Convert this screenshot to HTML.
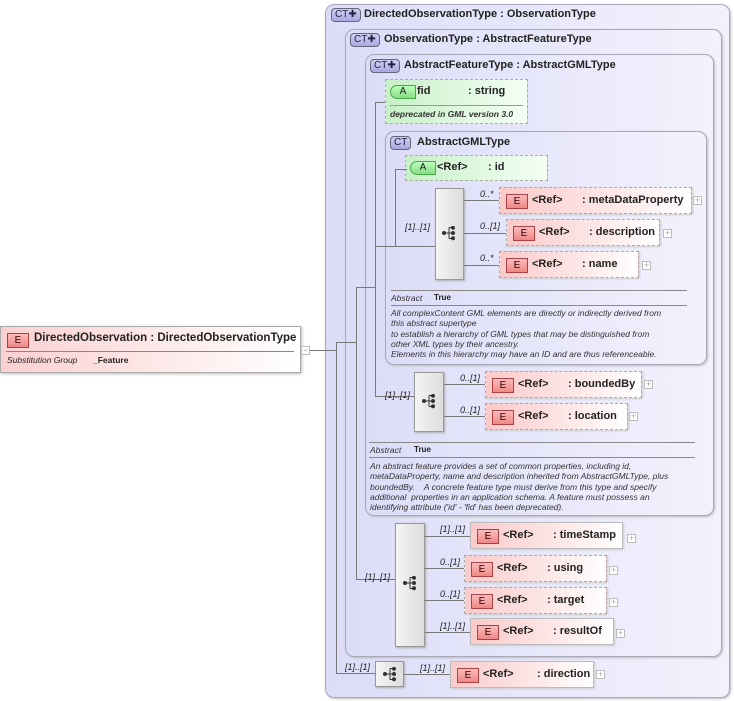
<!DOCTYPE html>
<html><head><meta charset="utf-8"><style>
*{margin:0;padding:0;box-sizing:border-box}
body{width:734px;height:701px;background:#fff;position:relative;overflow:hidden;font-family:"Liberation Sans",Arial,sans-serif;color:#222}
.a{position:absolute}
.ct{position:absolute;border:1px solid #a8a8b8;border-radius:9px;background:linear-gradient(to right,#dcdcf8,#ececfc 70%,#f2f2fd);box-shadow:1px 1px 2px #bbb}
.ttl{position:absolute;font-size:11px;font-weight:bold;white-space:nowrap}
.badge{position:absolute;height:14px;border:1px solid #667;border-radius:4px;background:linear-gradient(#d0d0f4,#a8a8e0);font-size:10px;line-height:12px;padding:0 3px;color:#224}
.el{position:absolute;height:27px;background:linear-gradient(to right,#fbcaca,#fde8e8 60%,#fff);border:1px solid #bbb;box-shadow:1px 1px 2px #ccc;font-size:11px;font-weight:bold;white-space:nowrap}
.el.d{border:1px dashed #aaa}
.eb{position:absolute;left:6px;top:6px;width:22px;height:15px;border:1px solid #a44;background:linear-gradient(#fbb,#e88);font-size:10px;font-weight:normal;text-align:center;line-height:13px;color:#300}
.el .r{position:absolute;left:32px;top:6px}
.el .n{position:absolute;top:6px}
.pl{position:absolute;width:9px;height:9px;border:1px solid #bbb;background:#fff;font-size:9px;line-height:7px;text-align:center;color:#aaa}
.seq{position:absolute;border:1px solid #999;background:linear-gradient(to right,#f4f4f4,#ddd);box-shadow:1px 1px 2px #aaa}
.lab{position:absolute;font-size:9px;font-style:italic;white-space:nowrap;color:#222}
.h{position:absolute;height:1px;background:#777}
.v{position:absolute;width:1px;background:#777}
.at{position:absolute;background:linear-gradient(to right,#c8f0c8,#f4fff4);border:1px dashed #aaa;font-size:11px;font-weight:bold;white-space:nowrap}
.ab{position:absolute;left:4px;top:5px;width:26px;height:14px;border:1px solid #4a4;border-radius:7px 0 0 7px;background:linear-gradient(#bfb,#8d8);font-size:10px;font-weight:normal;text-align:center;line-height:12px}
.doc{position:absolute;font-size:8.5px;font-style:italic;line-height:10.3px;color:#333}
</style></head><body>
<svg width="0" height="0" style="position:absolute"><defs><g id="sq"><circle cx="2" cy="7" r="2" fill="#333"/><path d="M2 7H7M7 1.5V12.5M7 1.5H10M7 7H10M7 12.5H10" stroke="#333" fill="none"/><circle cx="11" cy="1.8" r="2" fill="#333"/><circle cx="11" cy="7" r="2" fill="#333"/><circle cx="11" cy="12.2" r="2" fill="#333"/></g></defs></svg>

<div class="a" style="left:0;top:326px;width:301px;height:47px;border:1px solid #aaa;background:linear-gradient(to right,#fbd0d0,#fff);box-shadow:1px 1px 3px #bbb">
<div class="eb" style="left:6px;top:6px">E</div>
<div class="a" style="left:33px;top:5px;font-size:11.5px;font-weight:bold;white-space:nowrap">DirectedObservation : DirectedObservationType</div>
<div class="a" style="left:5px;top:24px;width:288px;height:1px;background:#888"></div>
<div class="a" style="left:6px;top:28px;font-size:8.5px;font-style:italic">Substitution Group</div>
<div class="a" style="left:92px;top:28px;font-size:8.5px;font-weight:bold">_Feature</div>
</div>
<div class="pl" style="left:301px;top:346px">−</div>

<div class="ct" style="left:325px;top:4px;width:405px;height:694px"></div>
<div class="badge" style="left:331px;top:8px">CT✚</div>
<div class="ttl" style="left:364px;top:8px">DirectedObservationType : ObservationType</div>
<div class="ct" style="left:345px;top:29px;width:377px;height:628px"></div>
<div class="badge" style="left:350px;top:33px">CT✚</div>
<div class="ttl" style="left:384px;top:33px">ObservationType : AbstractFeatureType</div>
<div class="ct" style="left:365px;top:54px;width:349px;height:462px"></div>
<div class="badge" style="left:370px;top:59px">CT✚</div>
<div class="ttl" style="left:404px;top:59px">AbstractFeatureType : AbstractGMLType</div>

<div class="at" style="left:385px;top:79px;width:143px;height:45px">
<div class="ab">A</div><div class="a" style="left:31px;top:5px">fid</div><div class="a" style="left:82px;top:5px">: string</div>
<div class="a" style="left:4px;top:25px;width:133px;height:1px;background:#999"></div>
<div class="doc" style="left:4px;top:29px">deprecated in GML version 3.0</div></div>

<div class="ct" style="left:385px;top:131px;width:322px;height:234px"></div>
<div class="badge" style="left:390px;top:136px">CT</div>
<div class="ttl" style="left:417px;top:136px">AbstractGMLType</div>
<div class="at" style="left:405px;top:155px;width:143px;height:26px"><div class="ab">A</div><div class="a" style="left:31px;top:5px">&lt;Ref&gt;</div><div class="a" style="left:82px;top:5px">: id</div></div>

<div class="seq" style="left:435px;top:188px;width:29px;height:92px"></div>
<svg class="a" style="left:442px;top:226px" width="14" height="15"><use href="#sq"/></svg>
<div class="h" style="left:464px;top:200px;width:35px"></div>
<div class="h" style="left:464px;top:233px;width:42px"></div>
<div class="h" style="left:464px;top:265px;width:35px"></div>
<div class="lab" style="left:480px;top:189px">0..*</div>
<div class="lab" style="left:480px;top:221px">0..[1]</div>
<div class="lab" style="left:480px;top:253px">0..*</div>
<div class="el d" style="left:499px;top:187px;width:193px"><div class="eb">E</div><span class="r">&lt;Ref&gt;</span><span class="n" style="left:82px">: metaDataProperty</span></div><div class="pl" style="left:693px;top:196px">+</div>
<div class="el d" style="left:506px;top:219px;width:154px"><div class="eb">E</div><span class="r">&lt;Ref&gt;</span><span class="n" style="left:82px">: description</span></div><div class="pl" style="left:663px;top:229px">+</div>
<div class="el d" style="left:499px;top:251px;width:140px"><div class="eb">E</div><span class="r">&lt;Ref&gt;</span><span class="n" style="left:82px">: name</span></div><div class="pl" style="left:642px;top:261px">+</div>

<div class="h" style="left:391px;top:290px;width:296px;background:#888"></div>
<div class="doc" style="left:391px;top:293px">Abstract</div><div class="a" style="left:434px;top:293px;font-size:8px;font-weight:bold">True</div>
<div class="h" style="left:391px;top:305px;width:296px;background:#888"></div>
<div class="doc" style="left:391px;top:308px">All complexContent GML elements are directly or indirectly derived from<br>this abstract supertype<br>to establish a hierarchy of GML types that may be distinguished from<br>other XML types by their ancestry.<br>Elements in this hierarchy may have an ID and are thus referenceable.</div>

<div class="seq" style="left:414px;top:372px;width:30px;height:60px"></div>
<svg class="a" style="left:422px;top:394px" width="14" height="15"><use href="#sq"/></svg>
<div class="h" style="left:444px;top:384px;width:41px"></div>
<div class="h" style="left:444px;top:416px;width:41px"></div>
<div class="lab" style="left:460px;top:373px">0..[1]</div>
<div class="lab" style="left:460px;top:405px">0..[1]</div>
<div class="el d" style="left:485px;top:371px;width:157px"><div class="eb">E</div><span class="r">&lt;Ref&gt;</span><span class="n" style="left:82px">: boundedBy</span></div><div class="pl" style="left:644px;top:380px">+</div>
<div class="el d" style="left:485px;top:403px;width:143px"><div class="eb">E</div><span class="r">&lt;Ref&gt;</span><span class="n" style="left:82px">: location</span></div><div class="pl" style="left:629px;top:412px">+</div>

<div class="h" style="left:369px;top:442px;width:326px;background:#888"></div>
<div class="doc" style="left:370px;top:445px">Abstract</div><div class="a" style="left:414px;top:445px;font-size:8px;font-weight:bold">True</div>
<div class="h" style="left:369px;top:457px;width:326px;background:#888"></div>
<div class="doc" style="left:370px;top:461px">An abstract feature provides a set of common properties, including id,<br>metaDataProperty, name and description inherited from AbstractGMLType, plus<br>boundedBy.&nbsp;&nbsp;&nbsp; A concrete feature type must derive from this type and specify<br>additional&nbsp; properties in an application schema. A feature must possess an<br>identifying attribute ('id' - 'fid' has been deprecated).</div>

<div class="seq" style="left:395px;top:523px;width:30px;height:124px"></div>
<svg class="a" style="left:403px;top:576px" width="14" height="15"><use href="#sq"/></svg>
<div class="h" style="left:425px;top:536px;width:45px"></div>
<div class="h" style="left:425px;top:568px;width:39px"></div>
<div class="h" style="left:425px;top:600px;width:39px"></div>
<div class="h" style="left:425px;top:632px;width:45px"></div>
<div class="lab" style="left:440px;top:524px">[1]..[1]</div>
<div class="lab" style="left:440px;top:557px">0..[1]</div>
<div class="lab" style="left:440px;top:589px">0..[1]</div>
<div class="lab" style="left:440px;top:621px">[1]..[1]</div>
<div class="el" style="left:470px;top:522px;width:153px"><div class="eb">E</div><span class="r">&lt;Ref&gt;</span><span class="n" style="left:82px">: timeStamp</span></div><div class="pl" style="left:627px;top:534px">+</div>
<div class="el d" style="left:464px;top:555px;width:143px"><div class="eb">E</div><span class="r">&lt;Ref&gt;</span><span class="n" style="left:82px">: using</span></div><div class="pl" style="left:609px;top:566px">+</div>
<div class="el d" style="left:464px;top:587px;width:143px"><div class="eb">E</div><span class="r">&lt;Ref&gt;</span><span class="n" style="left:82px">: target</span></div><div class="pl" style="left:609px;top:598px">+</div>
<div class="el" style="left:470px;top:618px;width:144px"><div class="eb">E</div><span class="r">&lt;Ref&gt;</span><span class="n" style="left:82px">: resultOf</span></div><div class="pl" style="left:616px;top:629px">+</div>

<div class="seq" style="left:375px;top:661px;width:29px;height:26px"></div>
<svg class="a" style="left:383px;top:667px" width="14" height="15"><use href="#sq"/></svg>
<div class="h" style="left:404px;top:674px;width:46px"></div>
<div class="lab" style="left:420px;top:663px">[1]..[1]</div>
<div class="el" style="left:450px;top:661px;width:144px"><div class="eb">E</div><span class="r">&lt;Ref&gt;</span><span class="n" style="left:86px">: direction</span></div><div class="pl" style="left:596px;top:670px">+</div>

<div class="h" style="left:310px;top:350px;width:26px"></div>
<div class="v" style="left:336px;top:342px;height:332px"></div>
<div class="h" style="left:336px;top:342px;width:20px"></div>
<div class="h" style="left:336px;top:673px;width:39px"></div>
<div class="lab" style="left:345px;top:662px">[1]..[1]</div>
<div class="v" style="left:356px;top:287px;height:293px"></div>
<div class="h" style="left:356px;top:287px;width:19px"></div>
<div class="h" style="left:356px;top:579px;width:39px"></div>
<div class="lab" style="left:365px;top:572px">[1]..[1]</div>
<div class="v" style="left:375px;top:102px;height:295px"></div>
<div class="h" style="left:375px;top:102px;width:10px"></div>
<div class="h" style="left:375px;top:396px;width:39px"></div>
<div class="lab" style="left:385px;top:390px">[1]..[1]</div>
<div class="v" style="left:395px;top:169px;height:77px"></div>
<div class="h" style="left:395px;top:169px;width:12px"></div>
<div class="h" style="left:375px;top:246px;width:60px"></div>
<div class="lab" style="left:405px;top:222px">[1]..[1]</div>
</body></html>
